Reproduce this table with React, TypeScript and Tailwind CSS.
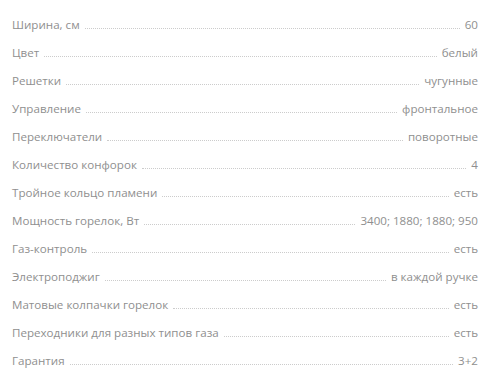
const specs = [
  { name: "Ширина, см", value: "60" },
  { name: "Цвет", value: "белый" },
  { name: "Решетки", value: "чугунные" },
  { name: "Управление", value: "фронтальное" },
  { name: "Переключатели", value: "поворотные" },
  { name: "Количество конфорок", value: "4" },
  { name: "Тройное кольцо пламени", value: "есть" },
  { name: "Мощность горелок, Вт", value: "3400; 1880; 1880; 950" },
  { name: "Газ-контроль", value: "есть" },
  { name: "Электроподжиг", value: "в каждой ручке" },
  { name: "Матовые колпачки горелок", value: "есть" },
  { name: "Переходники для разных типов газа", value: "есть" },
  { name: "Гарантия", value: "3+2" },
];

export default function App() {
  return (
    <div className="w-[500px] h-[377px] bg-white pt-[11px] pl-[12px] pr-[22px] font-['Open_Sans',sans-serif] text-[11.6px] text-[#8f8f8f]">
      {specs.map((s) => (
        <div key={s.name} className="flex items-baseline h-[28px] leading-[28px]">
          <span className="whitespace-nowrap">{s.name}</span>
          <span className="flex-1 mx-[5px] border-b border-dotted border-[#cccccc]" />
          <span className="whitespace-nowrap">{s.value}</span>
        </div>
      ))}
    </div>
  );
}
